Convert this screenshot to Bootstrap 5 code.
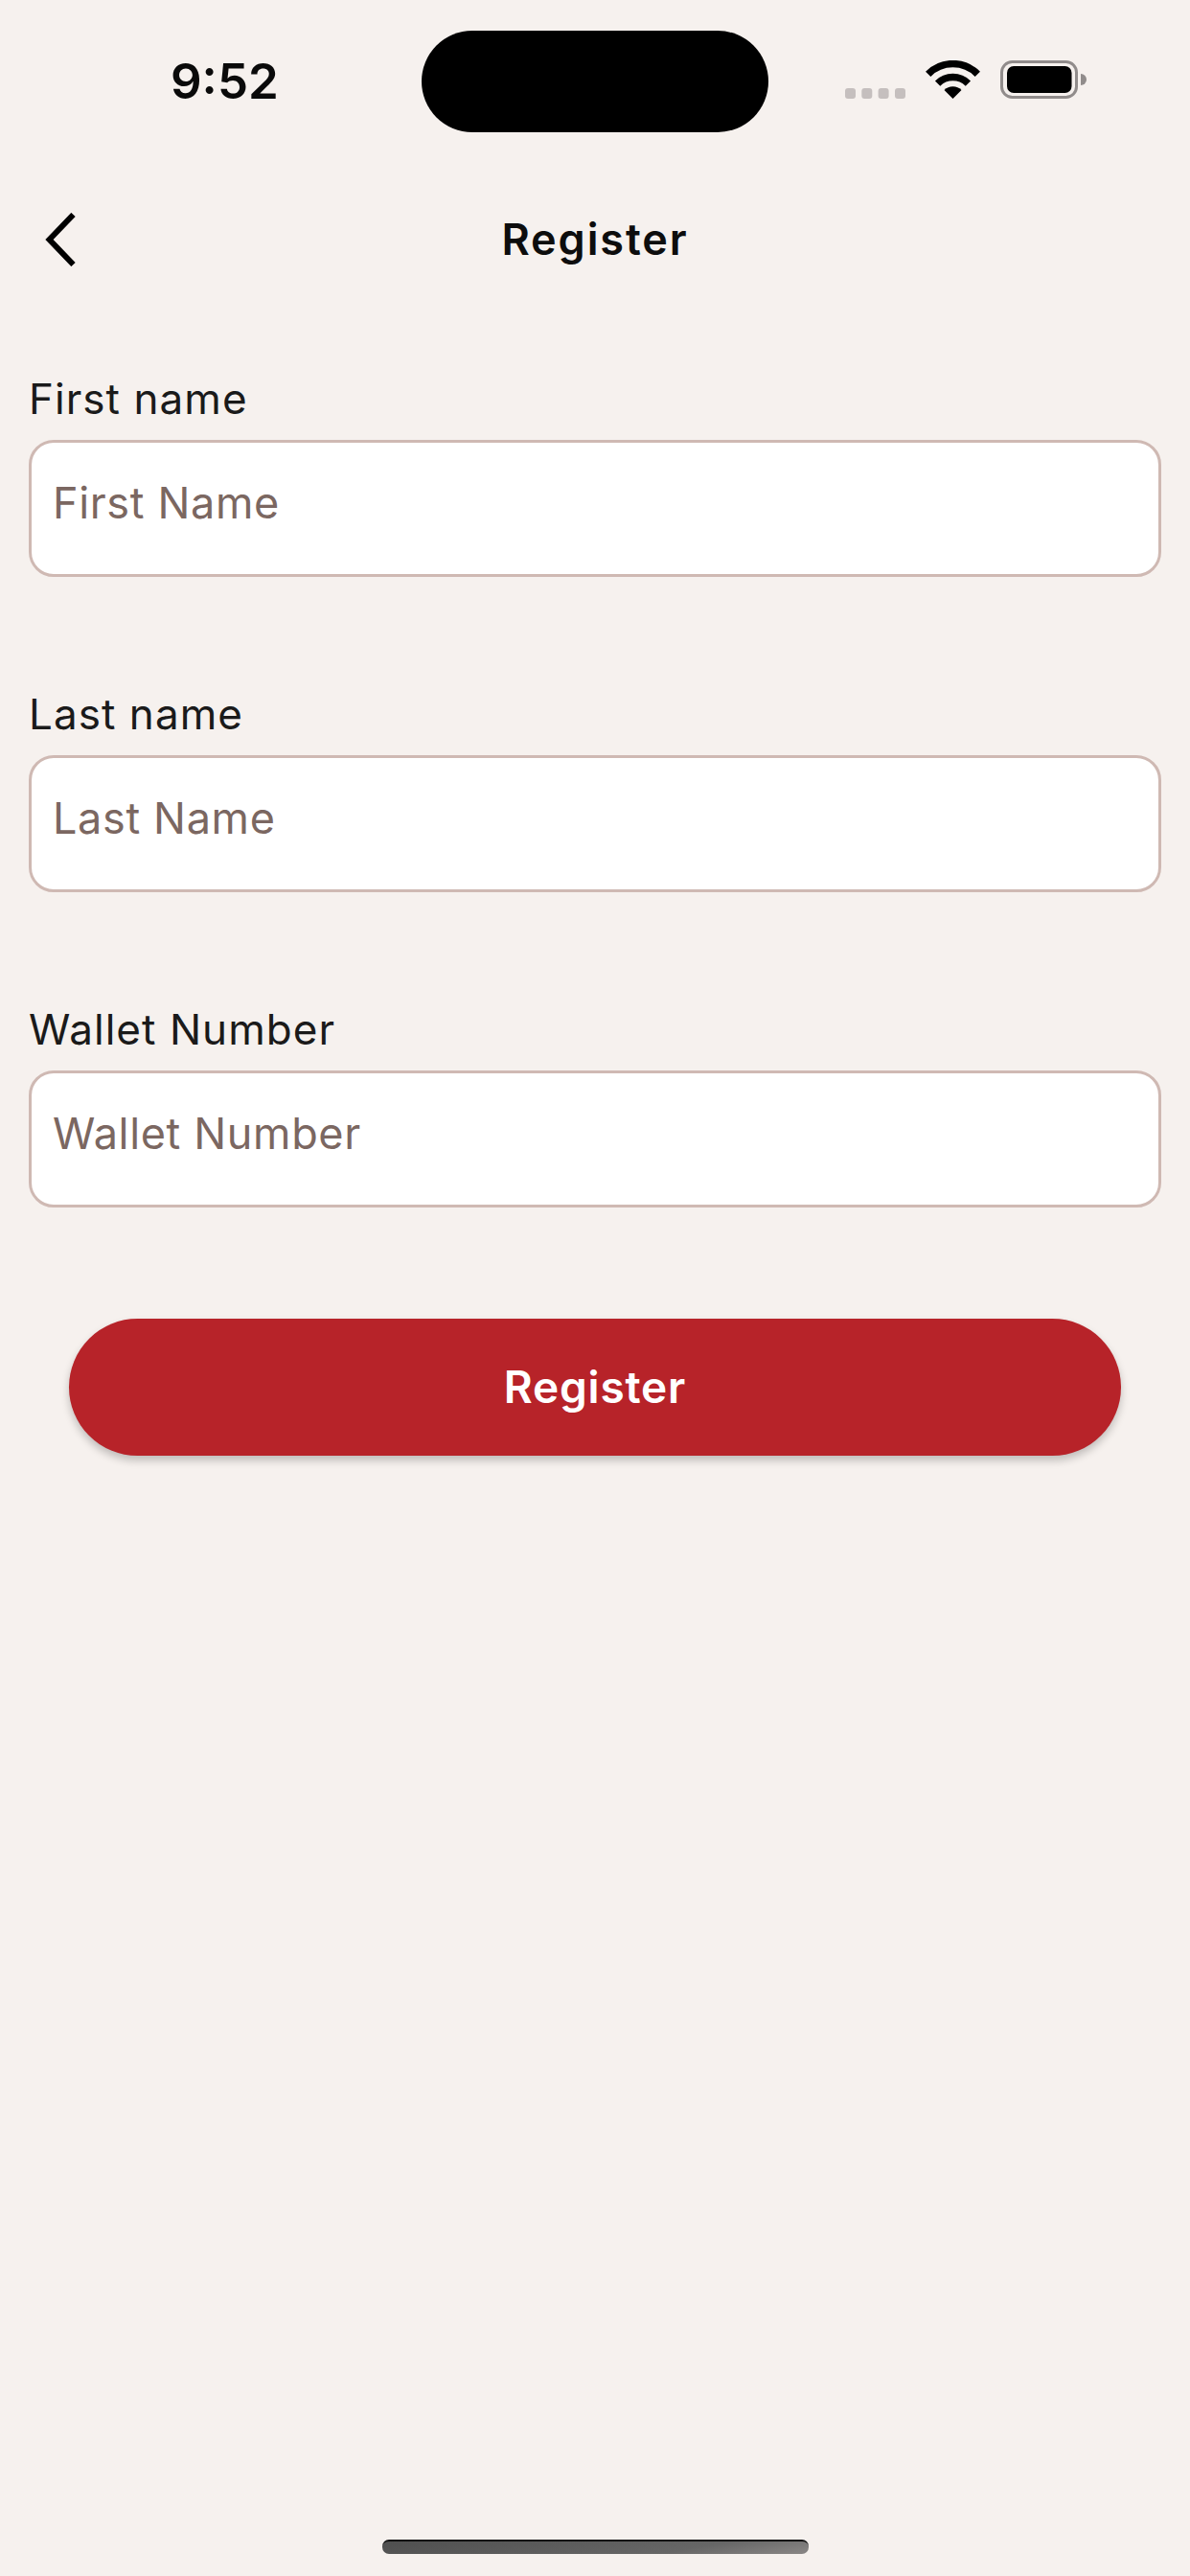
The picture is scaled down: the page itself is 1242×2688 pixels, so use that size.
<!DOCTYPE html>
<html lang="en">
<head>
<meta charset="utf-8">
<title>Register</title>
<link href="https://cdn.jsdelivr.net/npm/bootstrap@5.3.0/dist/css/bootstrap.min.css" rel="stylesheet">
<style>
html, body { background: #f6f1ee; }
body { font-family: Inter, "Liberation Sans", sans-serif; width: 1242px; height: 2688px; overflow: hidden; color: #1a1a1a; }
.app-screen { height: 2688px; }
.status-bar { height: 190px; padding: 32px 108px 0 178px; }
.status-time { width: 262px; font-size: 51px; line-height: 106px; font-weight: 600; color: #0a0a0a; }
.status-island { width: 362px; height: 106px; background: #000; border-radius: 53px; }
.status-icons { margin-left: 80px; margin-top: 31px; width: 252px; height: 40px; }
.top-bar { height: 120px; padding: 0 30px; }
.back-link { width: 32px; height: 56px; margin-left: 17px; }
.back-link svg { display: block; }
.top-bar-title { flex: 1; margin: 0 49px 0 0; font-size: 45px; font-weight: 600; line-height: 122px; letter-spacing: 1.9px; color: #0d0d0d; }
.reg-form { padding: 0 30px; margin-top: 80px; gap: 117px; }
.field-label { font-size: 44px; line-height: 52px; letter-spacing: 1.05px; margin-bottom: 17px; color: #1a1a1a; display: block; }
.field-input.form-control { height: 143px; border: 3px solid #cfb9b3; border-radius: 26px; background: #fff; padding: 0 22px 12px; font-size: 45px; letter-spacing: .65px; color: #1a1a1a; box-shadow: none; }
.field-input.form-control::placeholder { color: #7b6761; opacity: 1; }
.submit-wrap { padding: 0 72px; margin-top: 116px; }
.submit-btn.btn { height: 143px; background: #b72329; border: 0; color: #fff; font-size: 46px; font-weight: 600; letter-spacing: .8px; box-shadow: 0 5px 9px rgba(0,0,0,.22); }
.home-wrap { padding-bottom: 23px; }
.home-bar { width: 445px; height: 15px; border-radius: 7px; background: linear-gradient(170deg, #4f4f4f 0%, #666 70%, #8a8786 100%); border-top: 2px solid #111; }
</style>
</head>
<body>
<div class="app-screen d-flex flex-column">
  <div class="status-bar d-flex align-items-start">
    <div class="status-time">9:52</div>
    <div class="status-island"></div>
    <svg class="status-icons" viewBox="882 63 252 40" aria-hidden="true">
      <g fill="#c5bfbe">
        <rect x="882" y="92" width="11" height="11" rx="3"/>
        <rect x="899.3" y="92" width="11" height="11" rx="3"/>
        <rect x="916.6" y="92" width="11" height="11" rx="3"/>
        <rect x="934" y="92" width="11" height="11" rx="3"/>
      </g>
      <g fill="none" stroke="#000" stroke-width="7.5">
        <path d="M968.7 77.3 A36.5 36.5 0 0 1 1020.3 77.3"/>
        <path d="M978.6 87.1 A22.5 22.5 0 0 1 1010.4 87.1"/>
      </g>
      <path d="M994.5 103 L985.5 94 A12.7 12.7 0 0 1 1003.5 94 Z" fill="#000"/>
      <rect x="1045.5" y="64.5" width="78" height="37" rx="11" fill="none" stroke="#918c8b" stroke-width="3"/>
      <rect x="1051" y="69" width="67.5" height="28" rx="7" fill="#000"/>
      <path d="M1128 77 A6 6 0 0 1 1128 89 Z" fill="#918c8b"/>
    </svg>
  </div>
  <div class="top-bar d-flex align-items-center text-center">
    <a class="back-link" href="#" aria-label="Back">
      <svg width="32" height="56" viewBox="0 0 32 56"><path d="M29.5 2 L4.5 28 L29.5 54" fill="none" stroke="#000" stroke-width="6"/></svg>
    </a>
    <h1 class="top-bar-title">Register</h1>
  </div>
  <form class="reg-form d-flex flex-column">
    <div>
      <label class="field-label" for="fn">First name</label>
      <input id="fn" class="form-control field-input" type="text" placeholder="First Name">
    </div>
    <div>
      <label class="field-label" for="ln">Last name</label>
      <input id="ln" class="form-control field-input" type="text" placeholder="Last Name">
    </div>
    <div>
      <label class="field-label" for="wn">Wallet Number</label>
      <input id="wn" class="form-control field-input" type="text" placeholder="Wallet Number">
    </div>
  </form>
  <div class="submit-wrap">
    <button type="button" class="btn submit-btn rounded-pill w-100">Register</button>
  </div>
  <div class="home-wrap mt-auto d-flex justify-content-center">
    <div class="home-bar"></div>
  </div>
</div>
<script src="https://cdn.jsdelivr.net/npm/bootstrap@5.3.0/dist/js/bootstrap.bundle.min.js"></script>
</body>
</html>
